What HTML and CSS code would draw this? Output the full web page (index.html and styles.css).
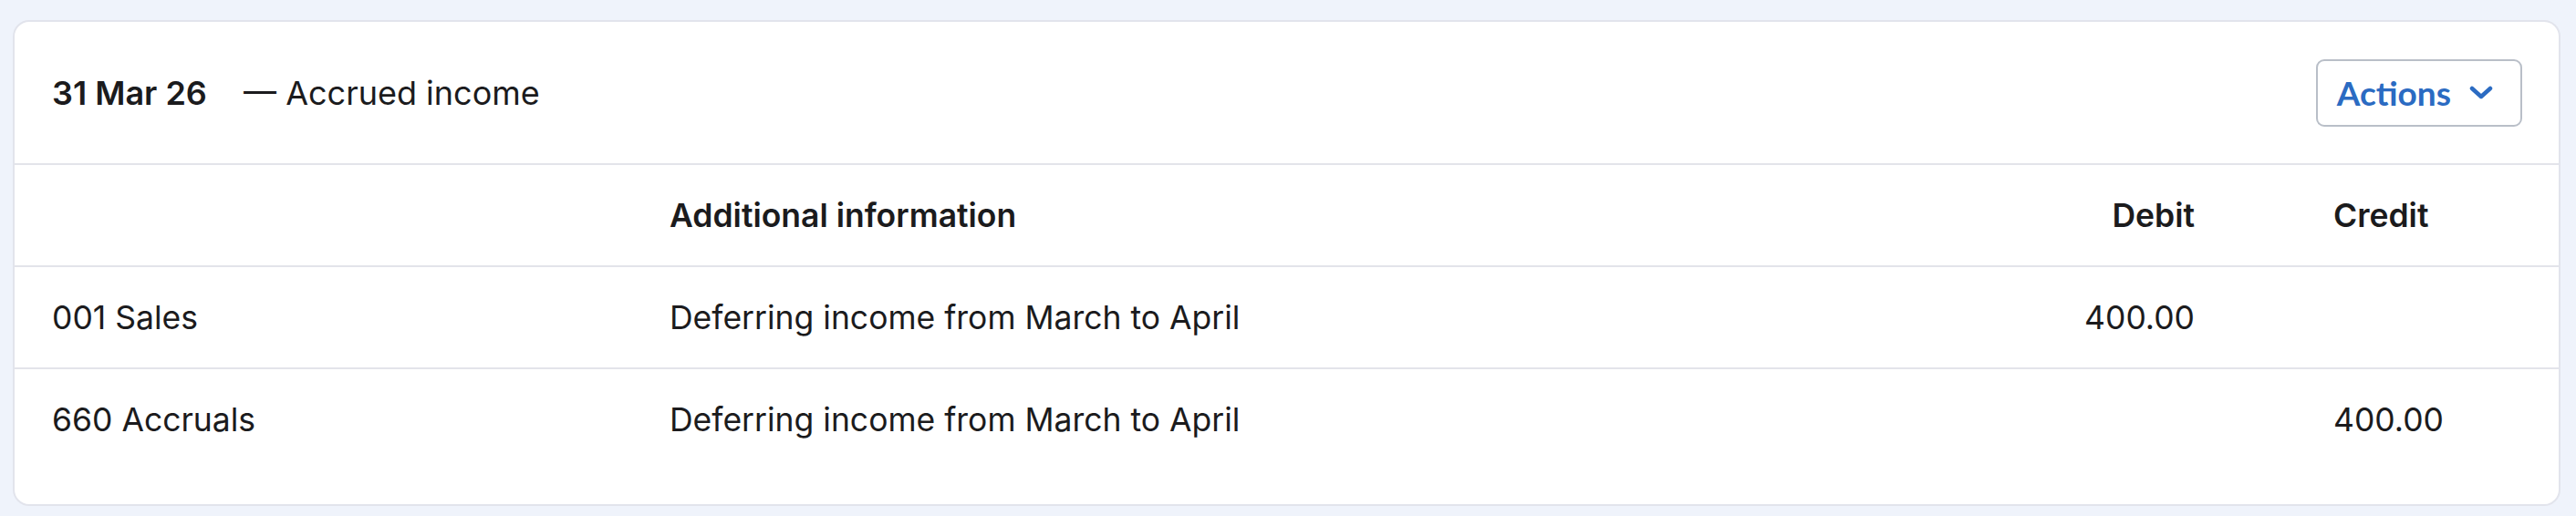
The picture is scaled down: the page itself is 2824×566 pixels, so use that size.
FILE: index.html
```html
<!DOCTYPE html>
<html lang="en">
<head>
  <meta charset="UTF-8" />
  <meta name="viewport" content="width=device-width, initial-scale=1.0"/>
  <title>Journal</title>
  <link rel="stylesheet" href="styles.css">
</head>
<body>
  <div class="journal-card">
    <div class="journal-head">
      <div class="journal-title">
        <span class="journal-date">31 Mar 26</span>
        <span class="journal-name">— Accrued income</span>
      </div>
      <button class="actions-btn">
        Actions
        <svg class="chevron" width="26" height="16" viewBox="0 0 26 16">
          <path d="M3 3 L13 12 L23 3" fill="none" stroke="currentColor" stroke-width="4.5" stroke-linecap="round" stroke-linejoin="round"/>
        </svg>
      </button>
    </div>

    <div class="line-row line-head">
      <div></div>
      <div>Additional information</div>
      <div class="num">Debit</div>
      <div class="credit">Credit</div>
    </div>
    <div class="line-row">
      <div>001 Sales</div>
      <div>Deferring income from March to April</div>
      <div class="num">400.00</div>
      <div class="credit"></div>
    </div>
    <div class="line-row">
      <div>660 Accruals</div>
      <div>Deferring income from March to April</div>
      <div class="num"></div>
      <div class="credit">400.00</div>
    </div>
  </div>
</body>
</html>
```

FILE: styles.css
```css
body {
  margin: 0;
  padding: 22px 17px 9px 14px;
  background: #eff3fb;
  font-family: Inter, 'Noto Sans', sans-serif;
  color: #1b1b1d;
}

.journal-card {
  background: white;
  border: 2px solid #e2e4ec;
  border-radius: 18px;
  padding-bottom: 38px;
}

.journal-head {
  display: flex;
  align-items: center;
  justify-content: space-between;
  height: 155px;
  padding: 0 40px 0 41px;
  border-bottom: 2px solid #e3e4ea;
}

.journal-title {
  font-size: 36px;
}

.journal-date {
  font-weight: 600;
  margin-right: 30px;
}

.actions-btn {
  display: flex;
  align-items: center;
  gap: 20px;
  height: 74px;
  padding: 0 30px 0 21px;
  background: white;
  border: 2px solid #b9bfc8;
  border-radius: 9px;
  color: #2b6bc2;
  font-family: Lato, 'Noto Sans', sans-serif;
  font-size: 37px;
  font-weight: bold;
  cursor: pointer;
}

.line-row {
  display: grid;
  grid-template-columns: 677px 1fr 200px 399px;
  align-items: center;
  height: 110px;
  padding-left: 41px;
  font-size: 35.5px;
}

.line-row + .line-row {
  border-top: 2px solid #e3e4ea;
}

.line-head {
  font-weight: 600;
}

.num {
  text-align: right;
}

.credit {
  padding-left: 152px;
}
```
